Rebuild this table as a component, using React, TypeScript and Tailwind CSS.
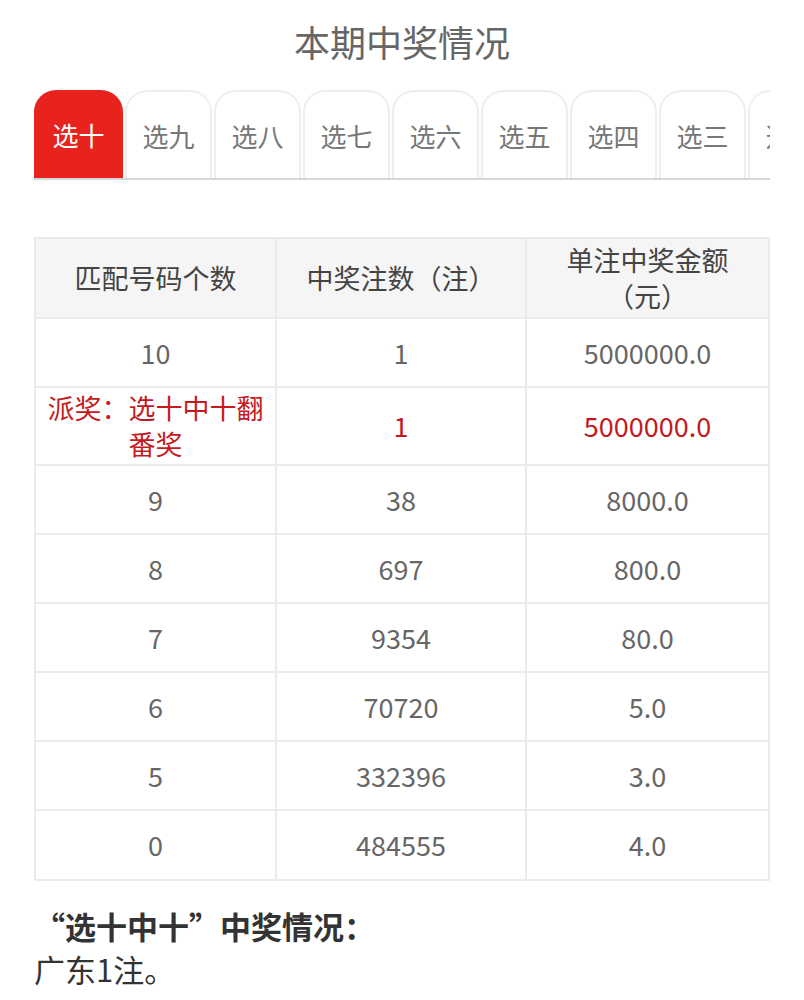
import React from "react";

const tabs = ["选十", "选九", "选八", "选七", "选六", "选五", "选四", "选三", "选二"];

const rows: { a: React.ReactNode; b: string; c: string; red?: boolean; h: string }[] = [
  { a: "10", b: "1", c: "5000000.0", h: "h-[69px]" },
  { a: <>派奖：选十中十翻<br />番奖</>, b: "1", c: "5000000.0", red: true, h: "h-[78px]" },
  { a: "9", b: "38", c: "8000.0", h: "h-[69px]" },
  { a: "8", b: "697", c: "800.0", h: "h-[69px]" },
  { a: "7", b: "9354", c: "80.0", h: "h-[69px]" },
  { a: "6", b: "70720", c: "5.0", h: "h-[69px]" },
  { a: "5", b: "332396", c: "3.0", h: "h-[69px]" },
  { a: "0", b: "484555", c: "4.0", h: "h-[70px]" },
];

export default function App() {
  return (
    <div
      className="w-[804px] h-[1000px] bg-white overflow-hidden"
      style={{ fontFamily: '"Noto Sans CJK SC", "Noto Sans", sans-serif' }}
    >
      <div className="h-[88px] flex items-center justify-center pb-[6px]">
        <h1 className="text-[36px] leading-none text-[#666] font-normal">本期中奖情况</h1>
      </div>

      <div className="ml-[34px] w-[736px] overflow-hidden mt-[2px]">
        <div className="flex gap-[2px] border-b-2 border-[#d6d6d6] w-max">
          {tabs.map((t, i) => (
            <div
              key={t}
              className={
                i === 0
                  ? "w-[89px] h-[88px] shrink-0 rounded-t-[22px] bg-[#e8231e] text-white flex items-center justify-center text-[26px]"
                  : "w-[87px] h-[88px] shrink-0 rounded-t-[22px] border-2 border-b-0 border-[#eeeeee] bg-white text-[#777] flex items-center justify-center text-[26px]"
              }
            >
              {t}
            </div>
          ))}
        </div>
      </div>

      <div className="ml-[34px] mt-[57px] w-[736px] border-2 border-[#ebebeb]">
        <div className="grid grid-cols-[241px_250px_241px] h-[78px] bg-[#f5f5f5] text-[#444] text-[27px] leading-[36px]">
          <div className="flex items-center justify-center text-center border-r-2 border-[#ebebeb]">匹配号码个数</div>
          <div className="flex items-center justify-center text-center border-r-2 border-[#ebebeb]">中奖注数（注）</div>
          <div className="flex items-center justify-center text-center">单注中奖金额<br />（元）</div>
        </div>
        {rows.map((r, i) => (
          <div
            key={i}
            className={`grid grid-cols-[241px_250px_241px] border-t-2 border-[#ebebeb] text-[27px] leading-[36px] ${r.h} ${r.red ? "text-[#c41a1e]" : "text-[#666]"}`}
          >
            <div className="flex items-center justify-center text-center border-r-2 border-[#ebebeb]">{r.a}</div>
            <div className="flex items-center justify-center text-center border-r-2 border-[#ebebeb]">{r.b}</div>
            <div className="flex items-center justify-center text-center">{r.c}</div>
          </div>
        ))}
      </div>

      <div className="ml-[34px] mt-[23px] text-[31px] leading-[43px] text-[#333]">
        <div className="font-bold">“选十中十”中奖情况：</div>
        <div>广东1注。</div>
      </div>
    </div>
  );
}
